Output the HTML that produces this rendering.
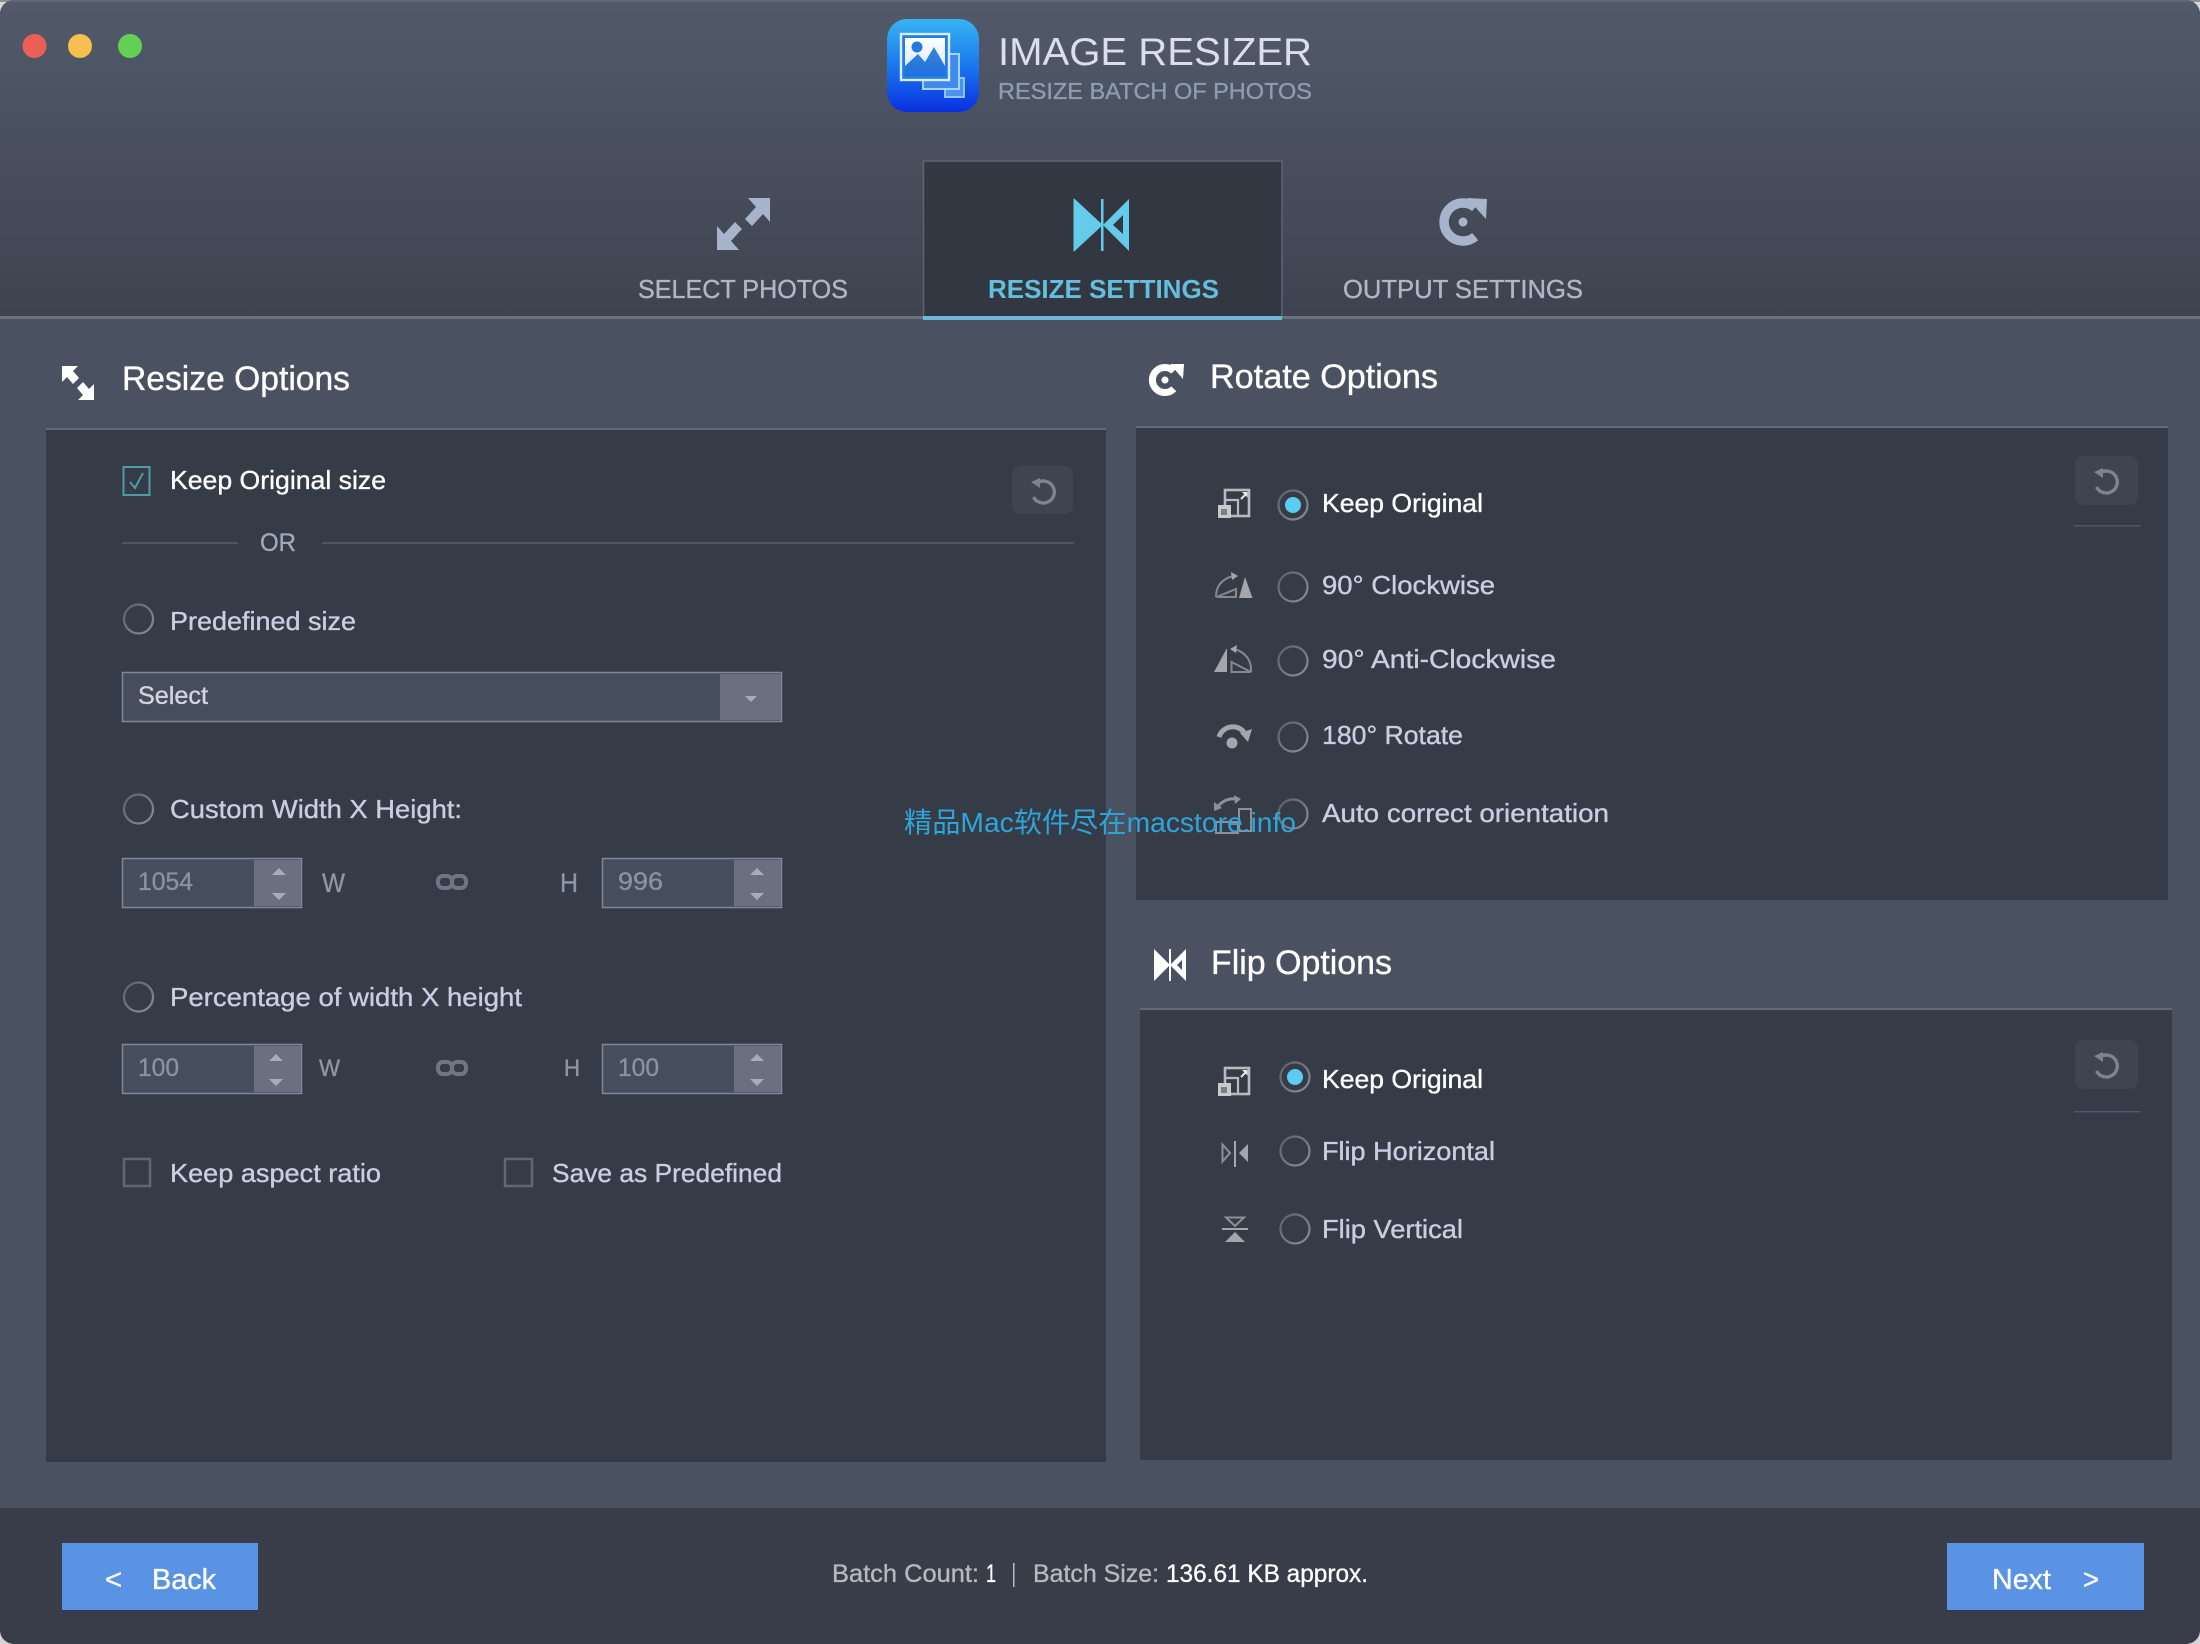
<!DOCTYPE html>
<html><head><meta charset="utf-8"><title>Image Resizer</title>
<style>
html,body{margin:0;padding:0;background:#d9d6d2;width:2200px;height:1644px;overflow:hidden}
svg{display:block;font-family:"Liberation Sans","Noto Sans CJK SC",sans-serif}
text{stroke-width:.35px}
text[fill="#fff"]{stroke:#fff}
text[fill="#c8cfe2"]{stroke:#c8cfe2}
text[fill="#afb7c7"]{stroke:#afb7c7}
text[fill="#d0d5e0"]{stroke:#d0d5e0}
text[fill="#8a93a3"]{stroke:#8a93a3}
text[fill="#8e97a8"]{stroke:#8e97a8}
text[fill="#a0a9bb"]{stroke:#a0a9bb}
text[fill="#b6b9be"]{stroke:#b6b9be}
text[fill="#8e9cb3"]{stroke:#8e9cb3}
</style></head><body>
<svg width="2200" height="1644" viewBox="0 0 2200 1644" xmlns="http://www.w3.org/2000/svg">
<defs>
<linearGradient id="hd" x1="0" y1="0" x2="0" y2="1"><stop offset="0" stop-color="#525a6a"/><stop offset="1" stop-color="#3e434f"/></linearGradient>
<linearGradient id="lg" x1="0" y1="0" x2="0" y2="1"><stop offset="0" stop-color="#38b4f2"/><stop offset=".5" stop-color="#1a78ee"/><stop offset="1" stop-color="#0a2fe0"/></linearGradient>
<linearGradient id="pic" x1="0" y1="0" x2="0" y2="1"><stop offset="0" stop-color="#fff"/><stop offset="1" stop-color="#cfe4fa"/></linearGradient>
<linearGradient id="mtn" x1="0" y1="0" x2="0" y2="1"><stop offset="0" stop-color="#3a86d8"/><stop offset="1" stop-color="#1f6fe0"/></linearGradient>
<linearGradient id="rad" x1="0" y1="0" x2="1" y2="1"><stop offset="0" stop-color="#5c6068"/><stop offset="1" stop-color="#8b8e94"/></linearGradient>
<g id="radio"><circle r="14.5" fill="none" stroke="url(#rad)" stroke-width="2.2"/></g>
<g id="reset"><path d="M-6-8A11 11 0 1 1-9.5 6" fill="none" stroke="#7e838d" stroke-width="3.4"/><path d="M-12-9L-3-13-3-3Z" fill="#7e838d"/></g>
<g id="link" fill="none" stroke="#6e7585" stroke-width="4"><rect x="-14" y="-6" width="14" height="12" rx="5"/><rect x="0" y="-6" width="14" height="12" rx="5"/></g>
<g id="ki"><rect x="8" y="2" width="24" height="26" fill="none" stroke="#b8babe" stroke-width="2.6"/><path d="M8 12H21V28" fill="none" stroke="#b8babe" stroke-width="2.2"/><rect x="1" y="17" width="13" height="13" fill="#c8cacd"/><rect x="4" y="21" width="6" height="6" fill="#7a7e87"/><path d="M24 11L29 6" stroke="#e4e5e8" stroke-width="2" fill="none"/><path d="M25 4H30.500V9.500Z" fill="#e8e9eb"/></g>
</defs>

<rect x="0" y="0" width="2200" height="1644" rx="14" fill="#4a5261"/>
<path d="M0 316V14A14 14 0 0 1 14 0H2186A14 14 0 0 1 2200 14V316Z" fill="url(#hd)"/>
<rect x="0" y="0" width="2200" height="2" fill="#666d7b" opacity=".7"/>

<!-- traffic lights -->
<circle cx="34.500" cy="46" r="12" fill="#ec5f56"/>
<circle cx="80" cy="46" r="12" fill="#f6bf4f"/>
<circle cx="130" cy="46" r="12" fill="#62cf55"/>

<!-- logo -->
<rect x="887" y="19" width="92" height="93" rx="20" fill="url(#lg)"/>
<rect x="945" y="78" width="19" height="19" fill="#4d93ee" stroke="#8fc2f6" stroke-width="2"/>
<rect x="923" y="54" width="36" height="35" fill="#3f8aec" stroke="#a9d2f8" stroke-width="2"/>
<rect x="901" y="34" width="48" height="46" fill="#1f7fe8" stroke="#dcecfb" stroke-width="2.4"/>
<rect x="905" y="38" width="40" height="38" fill="url(#pic)"/>
<circle cx="917" cy="47" r="5.500" fill="#2379dc"/>
<path d="M905 76V66L918 54 925 62 934 47 945 66V76Z" fill="url(#mtn)"/>
<text x="998" y="65" font-size="39" fill="#d9dfeb" textLength="314" lengthAdjust="spacingAndGlyphs">IMAGE RESIZER</text>
<text x="998" y="99" font-size="23" fill="#8e9cb3" textLength="314" lengthAdjust="spacingAndGlyphs">RESIZE BATCH OF PHOTOS</text>

<!-- tabs -->
<rect x="923.500" y="161" width="358.500" height="156" fill="#333741" stroke="#5c6372" stroke-width="1.500"/>
<rect x="0" y="316" width="2200" height="3" fill="#69717f"/>
<rect x="923" y="316" width="359" height="4" fill="#6fb9d8"/>
<path d="M770 198V222L763 214 752 226 745 219 756 207 748 198Z" fill="#a8b4cc"/>
<path d="M717 250V226L724 234 735 222 742 229 731 241 739 250Z" fill="#a8b4cc"/>
<path d="M1074 199L1102 225 1074 251Z" fill="#65cbeb" stroke="#65cbeb" stroke-linejoin="round"/>
<rect x="1101" y="199" width="2.500" height="52" fill="#65cbeb"/>
<path fill-rule="evenodd" d="M1129 199L1103 225 1129 251ZM1123 215L1113 225 1123 234Z" fill="#65cbeb"/>
<path d="M1475.200 207.400A19 19 0 1 0 1475.200 236.600" fill="none" stroke="#a8b4cc" stroke-width="9.500"/>
<path d="M1467 198L1487 199 1486 219Z" fill="#a8b4cc"/>
<circle cx="1463" cy="222" r="4.500" fill="#a8b4cc"/>
<text x="638" y="298" font-size="26" fill="#afb7c7" textLength="210" lengthAdjust="spacingAndGlyphs">SELECT PHOTOS</text>
<text x="988" y="298" font-size="26" font-weight="bold" fill="#64bfdc" textLength="231" lengthAdjust="spacingAndGlyphs">RESIZE SETTINGS</text>
<text x="1343" y="298" font-size="26" fill="#afb7c7" textLength="240" lengthAdjust="spacingAndGlyphs">OUTPUT SETTINGS</text>

<!-- headings -->
<path d="M62 366H78L73 371 79 378 73 384 67 377 62 382ZM94 400H78L83 395 77 388 83 382 89 389 94 384Z" fill="#fff"/>
<text x="122" y="390" font-size="34" fill="#fff" textLength="228" lengthAdjust="spacingAndGlyphs">Resize Options</text>
<path d="M1173.800 371.200A12.500 12.500 0 1 0 1173.800 388.800" fill="none" stroke="#fff" stroke-width="7"/>
<path d="M1170 364L1184 364 1183 379Z" fill="#fff"/>
<circle cx="1165" cy="380" r="3.500" fill="#fff"/>
<text x="1210" y="388" font-size="34" fill="#fff" textLength="228" lengthAdjust="spacingAndGlyphs">Rotate Options</text>
<path d="M1154 949L1170 965 1154 981Z" fill="#fff"/>
<rect x="1169" y="949" width="2" height="32" fill="#fff"/>
<path fill-rule="evenodd" d="M1186 949L1170 965 1186 981ZM1182 960L1177 965 1182 970Z" fill="#fff"/>
<text x="1211" y="974" font-size="34" fill="#fff" textLength="181" lengthAdjust="spacingAndGlyphs">Flip Options</text>

<!-- panels -->
<rect x="46" y="429" width="1060" height="1033" fill="#363c47"/><rect x="46" y="428" width="1060" height="2" fill="#616977"/>
<rect x="1136" y="427" width="1032" height="473" fill="#363c47"/><rect x="1136" y="426" width="1032" height="2" fill="#616977"/>
<rect x="1140" y="1009" width="1032" height="451" fill="#363c47"/><rect x="1140" y="1008" width="1032" height="2" fill="#616977"/>

<!-- left panel -->
<rect x="123.500" y="467" width="26" height="28" fill="none" stroke="#4f9ba6" stroke-width="2"/>
<path d="M130 482L135 488 143 473" fill="none" stroke="#4f9ba6" stroke-width="2"/>
<text x="170" y="489" font-size="26" fill="#fff" textLength="216" lengthAdjust="spacingAndGlyphs">Keep Original size</text>
<rect x="1012" y="466" width="61" height="48" rx="8" fill="#3e4450"/>
<use href="#reset" x="1043" y="491"/>
<rect x="122" y="542" width="116" height="2" fill="#4e5664"/>
<rect x="322" y="542" width="752" height="2" fill="#4e5664"/>
<text x="260" y="551" font-size="25" fill="#a0a9bb" textLength="36" lengthAdjust="spacingAndGlyphs">OR</text>
<use href="#radio" x="138.500" y="619"/>
<text x="170" y="630" font-size="26" fill="#c8cfe2" textLength="186" lengthAdjust="spacingAndGlyphs">Predefined size</text>
<rect x="122.500" y="672.500" width="659" height="49" fill="#464e5d" stroke="#7f8899" stroke-width="1.500"/>
<rect x="720" y="674" width="60.500" height="46" fill="#6a7080"/>
<path d="M745 696H757L751 702Z" fill="#a7acb6"/>
<text x="138" y="704" font-size="25" fill="#d0d5e0" textLength="70" lengthAdjust="spacingAndGlyphs">Select</text>

<use href="#radio" x="138.500" y="809"/>
<text x="170" y="818" font-size="26" fill="#c8cfe2" textLength="292" lengthAdjust="spacingAndGlyphs">Custom Width X Height:</text>
<rect x="122.500" y="858.500" width="179" height="49" fill="#464e5d" stroke="#7f8899" stroke-width="1.500"/>
<rect x="254" y="860" width="46.500" height="46" fill="#6a7080"/>
<path d="M272 875H286L279 868ZM272 893H286L279 900Z" fill="#a7acb6"/>
<text x="138" y="890" font-size="25" fill="#8a93a3" textLength="55" lengthAdjust="spacingAndGlyphs">1054</text>
<text x="322" y="892" font-size="27" fill="#8e97a8" textLength="23" lengthAdjust="spacingAndGlyphs">W</text>
<use href="#link" x="452" y="882"/>
<text x="560" y="892" font-size="27" fill="#8e97a8" textLength="18" lengthAdjust="spacingAndGlyphs">H</text>
<rect x="602.500" y="858.500" width="179" height="49" fill="#464e5d" stroke="#7f8899" stroke-width="1.500"/>
<rect x="734" y="860" width="46.500" height="46" fill="#6a7080"/>
<path d="M750 875H764L757 868ZM750 893H764L757 900Z" fill="#a7acb6"/>
<text x="618" y="890" font-size="25" fill="#8a93a3" textLength="45" lengthAdjust="spacingAndGlyphs">996</text>

<use href="#radio" x="138.500" y="997"/>
<text x="170" y="1006" font-size="26" fill="#c8cfe2" textLength="352" lengthAdjust="spacingAndGlyphs">Percentage of width X height</text>
<rect x="122.500" y="1044.500" width="179" height="49" fill="#464e5d" stroke="#7f8899" stroke-width="1.500"/>
<rect x="254" y="1046" width="46.500" height="46" fill="#6a7080"/>
<path d="M269 1061H283L276 1054ZM269 1079H283L276 1086Z" fill="#a7acb6"/>
<text x="138" y="1076" font-size="25" fill="#8a93a3" textLength="41" lengthAdjust="spacingAndGlyphs">100</text>
<text x="319" y="1076" font-size="24" fill="#8e97a8" textLength="21" lengthAdjust="spacingAndGlyphs">W</text>
<use href="#link" x="452" y="1068"/>
<text x="564" y="1076" font-size="24" fill="#8e97a8" textLength="16" lengthAdjust="spacingAndGlyphs">H</text>
<rect x="602.500" y="1044.500" width="179" height="49" fill="#464e5d" stroke="#7f8899" stroke-width="1.500"/>
<rect x="734" y="1046" width="46.500" height="46" fill="#6a7080"/>
<path d="M750 1061H764L757 1054ZM750 1079H764L757 1086Z" fill="#a7acb6"/>
<text x="618" y="1076" font-size="25" fill="#8a93a3" textLength="41" lengthAdjust="spacingAndGlyphs">100</text>

<rect x="124" y="1159" width="26" height="27" fill="none" stroke="#62676f" stroke-width="2.500"/>
<text x="170" y="1182" font-size="26" fill="#c8cfe2" textLength="211" lengthAdjust="spacingAndGlyphs">Keep aspect ratio</text>
<rect x="505" y="1159" width="27" height="27" fill="none" stroke="#62676f" stroke-width="2.500"/>
<text x="552" y="1182" font-size="26" fill="#c8cfe2" textLength="230" lengthAdjust="spacingAndGlyphs">Save as Predefined</text>

<!-- rotate panel -->
<rect x="2075" y="456" width="63" height="49" rx="8" fill="#3e4450"/>
<use href="#reset" x="2106" y="481"/>
<rect x="2074" y="525" width="67" height="1.500" fill="#4e5664"/>
<use href="#ki" x="1217" y="488"/>
<use href="#radio" x="1293" y="505"/><circle cx="1293" cy="505" r="8" fill="#5ccdf0"/>
<text x="1322" y="512" font-size="26" fill="#fff" textLength="161" lengthAdjust="spacingAndGlyphs">Keep Original</text>
<path d="M1216 597C1216 586 1222 579 1233 576M1216.500 597H1236V589Z" fill="none" stroke="#85888f" stroke-width="2"/>
<path d="M1245 577L1239 598H1252.500ZM1231 572L1238 576 1232 580Z" fill="#a4a6ab"/>
<path d="M1227 648L1214 672H1227Z" fill="#a4a6ab"/>
<path d="M1251 672C1252 660 1245 652 1234 649M1231.500 672H1251L1231.500 662Z" fill="none" stroke="#85888f" stroke-width="2"/>
<path d="M1237 645L1230 649 1236 653Z" fill="#a4a6ab"/>
<use href="#radio" x="1293" y="587"/>
<text x="1322" y="594" font-size="26" fill="#c8cfe2" textLength="173" lengthAdjust="spacingAndGlyphs">90° Clockwise</text>
<use href="#radio" x="1293" y="661"/>
<text x="1322" y="668" font-size="26" fill="#c8cfe2" textLength="234" lengthAdjust="spacingAndGlyphs">90° Anti-Clockwise</text>
<path d="M1219 737A14.500 14.500 0 0 1 1244 732" fill="none" stroke="#a4a6ab" stroke-width="5"/>
<path d="M1240 733L1252 729 1248 742Z" fill="#a4a6ab"/>
<circle cx="1232" cy="743" r="5.500" fill="#a4a6ab"/>
<use href="#radio" x="1293" y="737"/>
<text x="1322" y="744" font-size="26" fill="#c8cfe2" textLength="141" lengthAdjust="spacingAndGlyphs">180° Rotate</text>
<path d="M1217 808C1222 800 1230 798 1236 799" fill="none" stroke="#8e9096" stroke-width="3"/>
<path d="M1234 795L1241 799 1235 804ZM1214 802L1222 808 1214 811Z" fill="#8e9096"/>
<rect x="1239" y="809" width="12" height="22" fill="none" stroke="#8e9096" stroke-width="2"/>
<rect x="1216" y="822" width="22" height="11" fill="none" stroke="#8e9096" stroke-width="2"/>
<use href="#radio" x="1293" y="814"/>
<text x="1322" y="822" font-size="26" fill="#c8cfe2" textLength="287" lengthAdjust="spacingAndGlyphs">Auto correct orientation</text>

<!-- flip panel -->
<rect x="2075" y="1040" width="63" height="49" rx="8" fill="#3e4450"/>
<use href="#reset" x="2106" y="1065"/>
<rect x="2074" y="1111" width="67" height="1.500" fill="#4e5664"/>
<use href="#ki" x="1217" y="1066"/>
<use href="#radio" x="1295" y="1077"/><circle cx="1295" cy="1077" r="8" fill="#5ccdf0"/>
<text x="1322" y="1088" font-size="26" fill="#fff" textLength="161" lengthAdjust="spacingAndGlyphs">Keep Original</text>
<path d="M1222.500 1144.500L1230 1153 1222.500 1161.500Z" fill="none" stroke="#8e9096" stroke-width="2"/>
<rect x="1234" y="1141" width="2" height="26" fill="#a4a6ab"/>
<path d="M1248 1144L1239 1153 1248 1162Z" fill="#a4a6ab"/>
<use href="#radio" x="1295" y="1151"/>
<text x="1322" y="1160" font-size="26" fill="#c8cfe2" textLength="173" lengthAdjust="spacingAndGlyphs">Flip Horizontal</text>
<path d="M1226 1217.500H1244L1235 1226Z" fill="none" stroke="#8e9096" stroke-width="2"/>
<rect x="1222" y="1228" width="26" height="2" fill="#a4a6ab"/>
<path d="M1225 1242L1235 1232 1245 1242Z" fill="#a4a6ab"/>
<use href="#radio" x="1295" y="1229"/>
<text x="1322" y="1238" font-size="26" fill="#c8cfe2" textLength="141" lengthAdjust="spacingAndGlyphs">Flip Vertical</text>

<!-- watermark -->
<text x="904" y="832" font-size="28" fill="#2ea5da" textLength="392" lengthAdjust="spacingAndGlyphs">精品Mac软件尽在macstore.info</text>

<!-- footer -->
<path d="M0 1508H2200V1630A14 14 0 0 1 2186 1644H14A14 14 0 0 1 0 1630Z" fill="#383d49"/>
<rect x="62" y="1545" width="196" height="67" fill="#2e3a56"/>
<rect x="62" y="1543" width="196" height="67" fill="#5a93e3"/>
<rect x="1947" y="1545" width="197" height="67" fill="#2e3a56"/>
<rect x="1947" y="1543" width="197" height="67" fill="#5a93e3"/>
<text x="105" y="1589" font-size="29" fill="#fff" textLength="17" lengthAdjust="spacingAndGlyphs">&lt;</text>
<text x="152" y="1589" font-size="29" fill="#fff" textLength="64" lengthAdjust="spacingAndGlyphs">Back</text>
<text x="1992" y="1589" font-size="29" fill="#fff" textLength="59" lengthAdjust="spacingAndGlyphs">Next</text>
<text x="2083" y="1589" font-size="29" fill="#fff" textLength="16" lengthAdjust="spacingAndGlyphs">&gt;</text>
<text x="832" y="1582" font-size="25" fill="#b6b9be" textLength="147" lengthAdjust="spacingAndGlyphs">Batch Count:</text>
<text x="986" y="1582" font-size="25" fill="#fff" textLength="10" lengthAdjust="spacingAndGlyphs">1</text>
<rect x="1013" y="1563" width="1.500" height="24" fill="#b6b9be"/>
<text x="1033" y="1582" font-size="25" fill="#b6b9be" textLength="126" lengthAdjust="spacingAndGlyphs">Batch Size:</text>
<text x="1166" y="1582" font-size="25" fill="#fff" textLength="202" lengthAdjust="spacingAndGlyphs">136.61 KB approx.</text>
</svg>
</body></html>
